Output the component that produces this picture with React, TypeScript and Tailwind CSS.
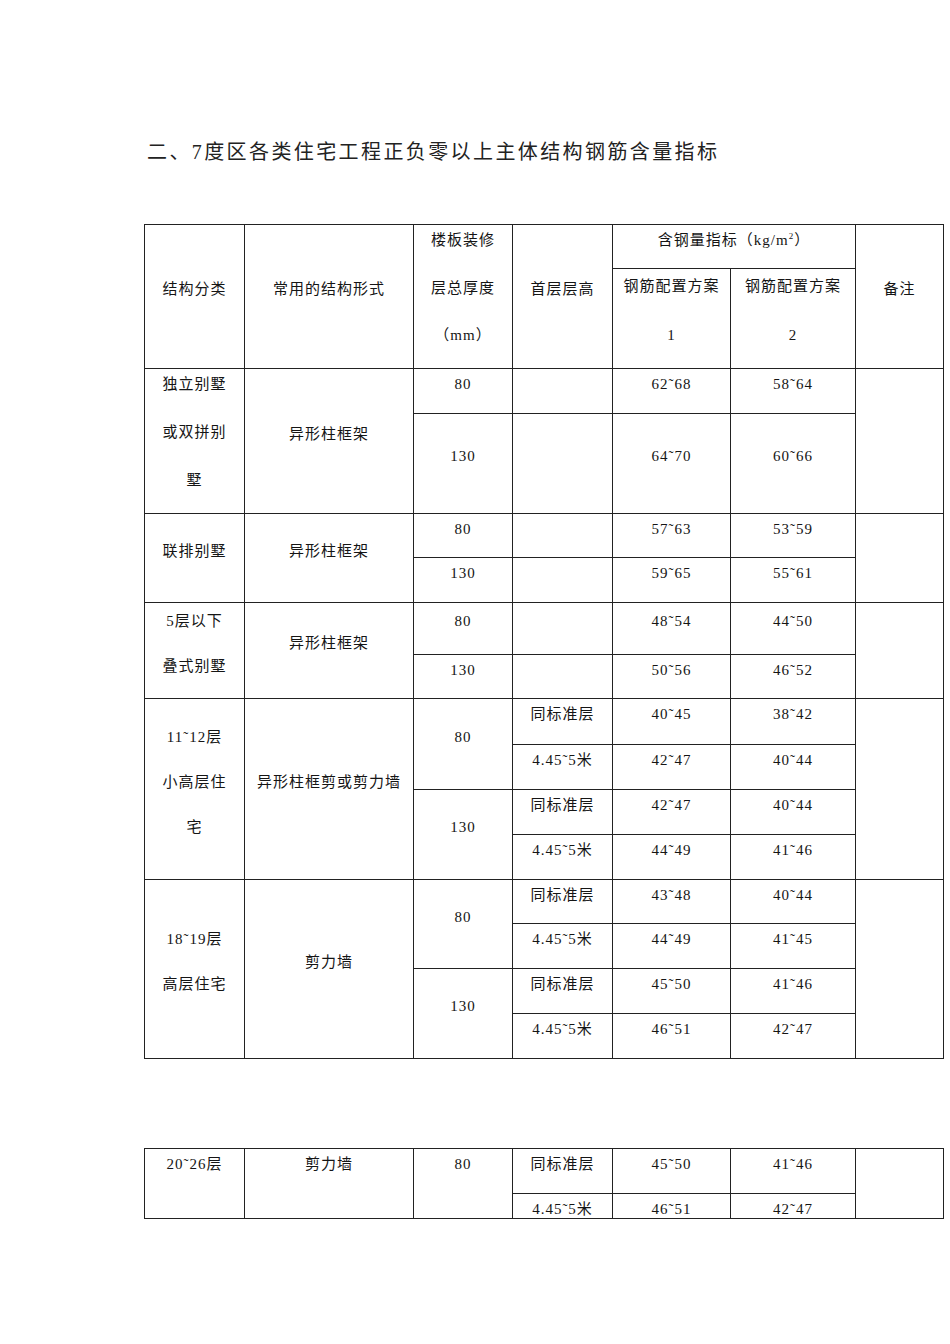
import type { ReactNode } from "react"

type CellProps = {
    className?: string
    lines: ReactNode[]
    lineClass?: string
    top?: boolean
}

// one table cell: text lines stacked, each line box holds the glyphs near its top
function Cell({ className = "", lines, lineClass = "h-[45px]", top = false }: CellProps) {
    return (
        <div className={`bg-white flex flex-col items-center ${top ? "justify-start" : "justify-center"} ${className}`}>
            {lines.map((line, i) => (
                <div key={i} className={`${lineClass} leading-[30px] whitespace-nowrap text-center`}>
                    {line}
                </div>
            ))}
        </div>
    )
}

const T = "\u02DC"

export default function App() {
    return (
        <div className="min-h-[1344px] w-full bg-white text-[#151515] font-['Liberation_Serif','Noto_Sans_CJK_SC',serif] text-[15px] tracking-[1px] pl-[144px] pt-[137px]">
            <div className="pl-[3px] text-[20px] tracking-[2.4px] leading-[30px] text-[#222]">
                二、7度区各类住宅工程正负零以上主体结构钢筋含量指标
            </div>

            {/* main table */}
            <div className="mt-[57px] w-fit grid gap-px p-px bg-[#222] grid-cols-[99px_168px_98px_99px_117px_124px_87px] grid-rows-[43px_99px_44px_99px_43px_44px_51px_43px_45px_44px_44px_44px_43px_44px_44px_44px]">
                {/* header */}
                <Cell top className="col-start-1 row-start-1 row-span-2" lineClass="h-[49px]" lines={["", "结构分类"]} />
                <Cell top className="col-start-2 row-start-1 row-span-2" lineClass="h-[49px]" lines={["", "常用的结构形式"]} />
                <Cell top className="col-start-3 row-start-1 row-span-2" lineClass="h-[49px]" lines={["楼板装修", "层总厚度", "（mm）"]} />
                <Cell top className="col-start-4 row-start-1 row-span-2" lineClass="h-[49px]" lines={["", "首层层高"]} />
                <Cell
                    top
                    className="col-start-5 col-span-2 row-start-1"
                    lineClass="h-[43px]"
                    lines={[
                        <span>
                            含钢量指标（kg/m<span className="relative -top-[6px] text-[9px]">2</span>）
                        </span>,
                    ]}
                />
                <Cell top className="col-start-5 row-start-2 pt-[2px]" lineClass="h-[49px]" lines={["钢筋配置方案", "1"]} />
                <Cell top className="col-start-6 row-start-2 pt-[2px]" lineClass="h-[49px]" lines={["钢筋配置方案", "2"]} />
                <Cell top className="col-start-7 row-start-1 row-span-2" lineClass="h-[49px]" lines={["", "备注"]} />

                {/* 独立别墅 */}
                <Cell className="col-start-1 row-start-3 row-span-2" lineClass="h-[49px]" lines={["独立别墅", "或双拼别", "墅"]} />
                <Cell className="col-start-2 row-start-3 row-span-2" lines={["异形柱框架"]} />
                <Cell className="col-start-3 row-start-3" lines={["80"]} />
                <Cell className="col-start-3 row-start-4" lines={["130"]} />
                <Cell className="col-start-4 row-start-3" lines={[]} />
                <Cell className="col-start-4 row-start-4" lines={[]} />
                <Cell className="col-start-5 row-start-3" lines={[`62${T}68`]} />
                <Cell className="col-start-6 row-start-3" lines={[`58${T}64`]} />
                <Cell className="col-start-5 row-start-4" lines={[`64${T}70`]} />
                <Cell className="col-start-6 row-start-4" lines={[`60${T}66`]} />
                <Cell className="col-start-7 row-start-3 row-span-2" lines={[]} />

                {/* 联排别墅 */}
                <Cell className="col-start-1 row-start-5 row-span-2" lines={["联排别墅"]} />
                <Cell className="col-start-2 row-start-5 row-span-2" lines={["异形柱框架"]} />
                <Cell className="col-start-3 row-start-5" lines={["80"]} />
                <Cell className="col-start-3 row-start-6" lines={["130"]} />
                <Cell className="col-start-4 row-start-5" lines={[]} />
                <Cell className="col-start-4 row-start-6" lines={[]} />
                <Cell className="col-start-5 row-start-5" lines={[`57${T}63`]} />
                <Cell className="col-start-6 row-start-5" lines={[`53${T}59`]} />
                <Cell className="col-start-5 row-start-6" lines={[`59${T}65`]} />
                <Cell className="col-start-6 row-start-6" lines={[`55${T}61`]} />
                <Cell className="col-start-7 row-start-5 row-span-2" lines={[]} />

                {/* 5层以下 */}
                <Cell className="col-start-1 row-start-7 row-span-2" lines={["5层以下", "叠式别墅"]} />
                <Cell className="col-start-2 row-start-7 row-span-2" lines={["异形柱框架"]} />
                <Cell className="col-start-3 row-start-7" lines={["80"]} />
                <Cell className="col-start-3 row-start-8" lines={["130"]} />
                <Cell className="col-start-4 row-start-7" lines={[]} />
                <Cell className="col-start-4 row-start-8" lines={[]} />
                <Cell className="col-start-5 row-start-7" lines={[`48${T}54`]} />
                <Cell className="col-start-6 row-start-7" lines={[`44${T}50`]} />
                <Cell className="col-start-5 row-start-8" lines={[`50${T}56`]} />
                <Cell className="col-start-6 row-start-8" lines={[`46${T}52`]} />
                <Cell className="col-start-7 row-start-7 row-span-2" lines={[]} />

                {/* 11~12层 */}
                <Cell className="col-start-1 row-start-9 row-span-4" lines={[`11${T}12层`, "小高层住", "宅"]} />
                <Cell className="col-start-2 row-start-9 row-span-4" lines={["异形柱框剪或剪力墙"]} />
                <Cell className="col-start-3 row-start-9 row-span-2" lines={["80"]} />
                <Cell className="col-start-3 row-start-11 row-span-2" lines={["130"]} />
                <Cell className="col-start-4 row-start-9" lines={["同标准层"]} />
                <Cell className="col-start-4 row-start-10" lines={[`4.45${T}5米`]} />
                <Cell className="col-start-4 row-start-11" lines={["同标准层"]} />
                <Cell className="col-start-4 row-start-12" lines={[`4.45${T}5米`]} />
                <Cell className="col-start-5 row-start-9" lines={[`40${T}45`]} />
                <Cell className="col-start-5 row-start-10" lines={[`42${T}47`]} />
                <Cell className="col-start-5 row-start-11" lines={[`42${T}47`]} />
                <Cell className="col-start-5 row-start-12" lines={[`44${T}49`]} />
                <Cell className="col-start-6 row-start-9" lines={[`38${T}42`]} />
                <Cell className="col-start-6 row-start-10" lines={[`40${T}44`]} />
                <Cell className="col-start-6 row-start-11" lines={[`40${T}44`]} />
                <Cell className="col-start-6 row-start-12" lines={[`41${T}46`]} />
                <Cell className="col-start-7 row-start-9 row-span-4" lines={[]} />

                {/* 18~19层 */}
                <Cell className="col-start-1 row-start-13 row-span-4" lines={[`18${T}19层`, "高层住宅"]} />
                <Cell className="col-start-2 row-start-13 row-span-4" lines={["剪力墙"]} />
                <Cell className="col-start-3 row-start-13 row-span-2" lines={["80"]} />
                <Cell className="col-start-3 row-start-15 row-span-2" lines={["130"]} />
                <Cell className="col-start-4 row-start-13" lines={["同标准层"]} />
                <Cell className="col-start-4 row-start-14" lines={[`4.45${T}5米`]} />
                <Cell className="col-start-4 row-start-15" lines={["同标准层"]} />
                <Cell className="col-start-4 row-start-16" lines={[`4.45${T}5米`]} />
                <Cell className="col-start-5 row-start-13" lines={[`43${T}48`]} />
                <Cell className="col-start-5 row-start-14" lines={[`44${T}49`]} />
                <Cell className="col-start-5 row-start-15" lines={[`45${T}50`]} />
                <Cell className="col-start-5 row-start-16" lines={[`46${T}51`]} />
                <Cell className="col-start-6 row-start-13" lines={[`40${T}44`]} />
                <Cell className="col-start-6 row-start-14" lines={[`41${T}45`]} />
                <Cell className="col-start-6 row-start-15" lines={[`41${T}46`]} />
                <Cell className="col-start-6 row-start-16" lines={[`42${T}47`]} />
                <Cell className="col-start-7 row-start-13 row-span-4" lines={[]} />
            </div>

            {/* continuation on the next page */}
            <div className="mt-[89px] w-fit grid gap-px p-px bg-[#222] grid-cols-[99px_168px_98px_99px_117px_124px_87px] grid-rows-[44px_24px]">
                <Cell top className="col-start-1 row-start-1 row-span-2" lineClass="h-[26px] leading-[26px]" lines={[`20${T}26层`]} />
                <Cell top className="col-start-2 row-start-1 row-span-2" lineClass="h-[26px] leading-[26px]" lines={["剪力墙"]} />
                <Cell top className="col-start-3 row-start-1 row-span-2" lineClass="h-[26px] leading-[26px]" lines={["80"]} />
                <Cell top className="col-start-4 row-start-1" lineClass="h-[26px] leading-[26px]" lines={["同标准层"]} />
                <Cell top className="col-start-4 row-start-2" lineClass="h-[26px] leading-[26px]" lines={[`4.45${T}5米`]} />
                <Cell top className="col-start-5 row-start-1" lineClass="h-[26px] leading-[26px]" lines={[`45${T}50`]} />
                <Cell top className="col-start-5 row-start-2" lineClass="h-[26px] leading-[26px]" lines={[`46${T}51`]} />
                <Cell top className="col-start-6 row-start-1" lineClass="h-[26px] leading-[26px]" lines={[`41${T}46`]} />
                <Cell top className="col-start-6 row-start-2" lineClass="h-[26px] leading-[26px]" lines={[`42${T}47`]} />
                <Cell className="col-start-7 row-start-1 row-span-2" lines={[]} />
            </div>
        </div>
    )
}
